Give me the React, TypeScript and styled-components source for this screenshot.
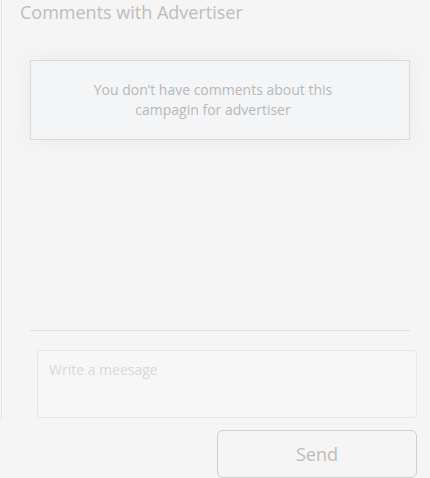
import React from 'react';
import styled, { createGlobalStyle } from 'styled-components';

const GlobalStyle = createGlobalStyle`
  html, body {
    margin: 0;
    padding: 0;
    background: #f5f5f5;
    font-family: 'Open Sans', 'Liberation Sans', sans-serif;
  }
`;

const Page = styled.div`
  width: 430px;
  height: 478px;
  overflow: hidden;
  display: flex;
  flex-direction: column;
`;

const Panel = styled.section`
  margin: -7px 0 0 1px;
  border-left: 1px solid #e3e6e9;
  height: 427px;
  flex-shrink: 0;
  box-sizing: border-box;
  display: flex;
  flex-direction: column;

  & > * {
    flex-shrink: 0;
  }
`;

const Title = styled.h2`
  margin: 0;
  padding-left: 18px;
  font-size: 18px;
  font-weight: 400;
  line-height: 38px;
  color: #bdbdbd;
`;

const EmptyBox = styled.div`
  margin: 29px 20px 0 28px;
  height: 80px;
  box-sizing: border-box;
  border: 1px solid #d9d9db;
  background: #f4f5f7;
  box-shadow: 0 0 22px rgba(0, 0, 0, 0.05);
  display: flex;
  align-items: center;
  justify-content: center;
  padding: 0 14px 0 0;
  text-align: center;
  font-size: 14px;
  line-height: 20px;
  color: #b8b8b8;
`;

const Divider = styled.hr`
  margin: 190px 20px 0 28px;
  border: none;
  border-top: 1px solid #e1e1e3;
`;

const MessageInput = styled.textarea`
  margin: 19px 0 0 35px;
  width: 380px;
  height: 68px;
  box-sizing: border-box;
  resize: none;
  border: 1px solid #e6e6e8;
  border-radius: 3px;
  background: #f7f7f7;
  padding: 9px 11px;
  font-family: 'Open Sans', 'Liberation Sans', sans-serif;
  font-size: 14px;
  line-height: 20px;
  color: #888;
  outline: none;

  &::placeholder {
    color: #d9d9d9;
  }
`;

const Actions = styled.div`
  display: flex;
  justify-content: flex-end;
  padding: 10px 13px 0 0;
`;

const SendButton = styled.button`
  width: 200px;
  height: 48px;
  flex-shrink: 0;
  border: 1px solid #cfcfd9;
  border-radius: 6px;
  background: #f5f5f5;
  font-family: 'Open Sans', 'Liberation Sans', sans-serif;
  font-size: 18px;
  color: #bcbcbc;
  cursor: pointer;
`;

export default function App() {
  return (
    <>
      <GlobalStyle />
      <Page>
        <Panel>
          <Title>Comments with Advertiser</Title>
          <EmptyBox>
            You don’t have comments about this
            <br />
            campagin for advertiser
          </EmptyBox>
          <Divider />
          <MessageInput placeholder="Write a meesage" />
        </Panel>
        <Actions>
          <SendButton>Send</SendButton>
        </Actions>
      </Page>
    </>
  );
}
